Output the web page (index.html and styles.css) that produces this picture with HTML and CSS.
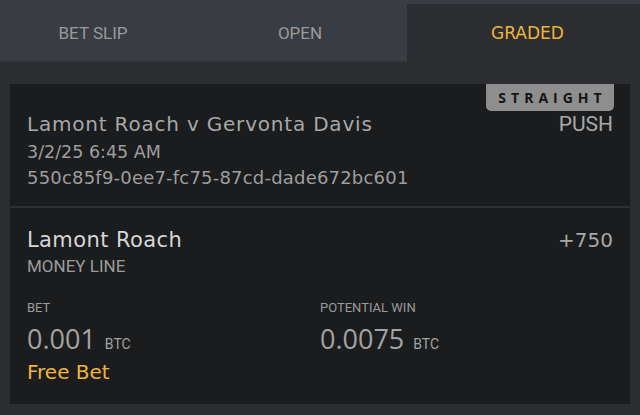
FILE: index.html
```html
<!DOCTYPE html>
<html>
<head>
<meta charset="utf-8">
<link rel="stylesheet" href="styles.css">
</head>
<body>
<div class="tabs">
  <div class="tab tab-slip">BET SLIP</div>
  <div class="tab tab-open">OPEN</div>
  <div class="tab tab-graded active">GRADED</div>
</div>
<div class="content">
  <div class="card">
    <div class="badge">STRAIGHT</div>
    <div class="head">
      <div class="row">
        <div class="event">Lamont Roach v Gervonta Davis</div>
        <div class="result">PUSH</div>
      </div>
      <div class="date">3/2/25 6:45 AM</div>
      <div class="betid">550c85f9-0ee7-fc75-87cd-dade672bc601</div>
    </div>
    <div class="sel">
      <div class="row">
        <div class="pick">Lamont Roach</div>
        <div class="odds">+750</div>
      </div>
      <div class="market">MONEY LINE</div>
      <div class="amounts">
        <div class="col">
          <div class="label">BET</div>
          <div class="amount">0.001 <span class="cur">BTC</span></div>
          <div class="free">Free Bet</div>
        </div>
        <div class="col">
          <div class="label">POTENTIAL WIN</div>
          <div class="amount">0.0075 <span class="cur">BTC</span></div>
        </div>
      </div>
    </div>
  </div>
</div>
</body>
</html>
```

FILE: styles.css
```css
* { box-sizing: border-box; }
html, body { margin: 0; padding: 0; }
body {
  width: 640px;
  height: 415px;
  background: #2c2d31;
  font-family: "DejaVu Sans", sans-serif;
  color: #a3a3a3;
  overflow: hidden;
}
.tabs {
  display: grid;
  grid-template-columns: 186px 221px 1fr;
  background: #393c43;
  height: 62px;
}
.tab {
  display: flex;
  align-items: center;
  justify-content: center;
  font-family: Roboto, sans-serif;
  font-size: 17px;
  color: #9a9a9a;
  padding-top: 4px;
  background: #393c43;
  border-bottom: 1px solid #34363c;
}
.tab-open { padding-left: 7px; }
.tab.active {
  margin-top: 4px;
  padding-top: 0;
  padding-left: 8px;
  background: #2c2d31;
  border-bottom: none;
  color: #f0b43c;
  font-family: "DejaVu Sans", sans-serif;
}
.content {
  padding: 22px 10px 0 10px;
}
.card {
  position: relative;
  background: #1b1c1e;
  height: 320px;
}
.badge {
  position: absolute;
  top: 0;
  right: 16px;
  width: 128px;
  height: 27px;
  background: #8e8e8e;
  border-radius: 0 0 5px 5px;
  color: #151515;
  font-family: "Open Sans", sans-serif;
  font-weight: 700;
  font-size: 14px;
  letter-spacing: 5px;
  display: flex;
  align-items: center;
  justify-content: center;
  padding-left: 5px;
}
.head {
  padding: 28px 17px 15px 17px;
  border-bottom: 2px solid #2e3035;
}
.row {
  display: flex;
  justify-content: space-between;
  align-items: baseline;
}
.event {
  font-size: 20px;
  line-height: 24px;
  letter-spacing: 0.8px;
  color: #a8a8a8;
}
.result {
  font-family: Roboto, sans-serif;
  font-size: 21px;
  color: #a8a8a8;
}
.date {
  font-size: 17.5px;
  line-height: 26px;
  margin-top: 3px;
  color: #9e9e9e;
}
.betid {
  font-size: 18px;
  line-height: 26px;
  letter-spacing: 0.2px;
  color: #9e9e9e;
}
.sel {
  padding: 19px 17px 0 17px;
}
.pick {
  font-size: 21px;
  line-height: 26px;
  letter-spacing: 0.4px;
  color: #d6d6d6;
}
.odds {
  font-size: 20px;
  color: #a8a8a8;
}
.market {
  font-family: Roboto, sans-serif;
  font-size: 17px;
  line-height: 24px;
  margin-top: 1px;
  color: #9c9c9c;
}
.amounts {
  display: grid;
  grid-template-columns: 1fr 1fr;
  margin-top: 22px;
}
.label {
  font-family: Roboto, sans-serif;
  font-size: 13px;
  line-height: 16px;
  color: #9a9a9a;
}
.amount {
  font-family: "Open Sans", sans-serif;
  font-size: 27px;
  line-height: 34px;
  margin-top: 6px;
  color: #a3a3a3;
}
.cur {
  font-family: Roboto, sans-serif;
  font-size: 14px;
  margin-left: 2px;
}
.free {
  font-size: 20px;
  line-height: 26px;
  margin-top: -2px;
  color: #f0b43c;
}
```
